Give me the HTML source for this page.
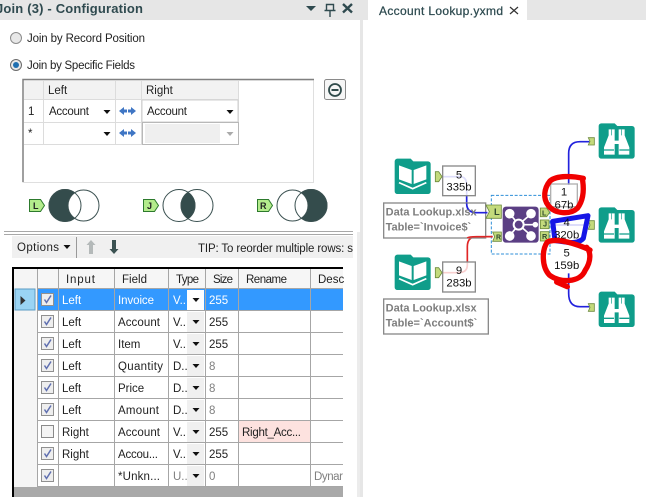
<!DOCTYPE html>
<html><head><meta charset="utf-8"><style>
html,body{margin:0;padding:0;background:#fff;width:646px;height:497px;overflow:hidden}
svg{display:block}
text{font-family:"Liberation Sans",sans-serif;font-size:11.5px;fill:#222}
.g{fill:#808080}.w{fill:#fff}
.n{font-size:33px;font-weight:bold;fill:#7d7d7d}
.c{font-size:34px;fill:#111;text-anchor:middle}
</style></head><body>
<svg width="646" height="497" viewBox="0 0 646 497" xmlns="http://www.w3.org/2000/svg">
<defs>
<path id="fo" d="M8 0H48L56 8H100a8 8 0 0 1 8 8V98a8 8 0 0 1-8 8H8a8 8 0 0 1-8-8V8a8 8 0 0 1 8-8z" fill="#0f9d8a"/>
<g id="book"><use href="#fo"/><path d="M13 20L51 34V76L13 62zM95 20L57 34V76L95 62z" fill="#fff"/><path d="M13 72L54 90L95 72" fill="none" stroke="#fff" stroke-width="5"/></g>
<g id="bin"><use href="#fo"/><path d="M30 18H48V52H60V18H78V36L92 72V94H60V62H48V94H16V72L30 36z" fill="#fff"/><path d="M16 80H46M62 80H92" stroke="#0f9d8a" stroke-width="4"/><path d="M39 18V36M69 18V36" stroke="#0f9d8a" stroke-width="2"/></g>
<path id="car" d="M-3.5 -2H3.5L0 2z" fill="#111"/>
<g id="chk"><rect x="-6" y="-6" width="12" height="12" fill="#eee" stroke="#909090"/><path d="M-3 0L-1 3L3.500 -4" fill="none" stroke="#6070b0" stroke-width="1.500"/></g>
<g id="arr"><path d="M0 4L5 0V2.500H8V5.500H5V8z" fill="#3f76c4" transform="translate(0,-4)"/><path d="M17 4L12 0V2.500H9V5.500H12V8z" fill="#3f76c4" transform="translate(0,-4)"/></g>
</defs>
<rect width="646" height="497" fill="#fff"/>
<!-- title bars -->
<rect width="646" height="20" fill="#e6e6e6"/>
<rect x="360" y="20" width="3" height="477" fill="#e6e6e6"/>
<rect x="357" y="232" width="3" height="265" fill="#ececec"/>
<text x="-4" y="13" style="font-size:13px;fill:#2f4a4f;font-weight:bold" textLength="147">Join (3) - Configuration</text>
<path d="M306 6H316L311 11z" fill="#2f4a4f"/>
<path d="M326.500 4.500H333.500V10.500H326.500zM324.500 10.500H335.500M330 11V17" fill="none" stroke="#2f4a4f" stroke-width="1.400"/>
<path d="M343 4L352 12.500M352 4L343 12.500" stroke="#2f4a4f" stroke-width="2.400"/>
<rect x="368" width="159" height="20" fill="#fff"/>
<text x="379" y="15" textLength="124" style="font-size:12px;fill:#2e4b50;stroke:#2e4b50;stroke-width:.25">Account Lookup.yxmd</text>
<path d="M510 7L518 14M518 7L510 14" stroke="#333" stroke-width="1.200"/>
<!-- radios -->
<circle cx="16" cy="38" r="5.500" fill="#e8e8e8" stroke="#8c8c8c"/>
<text x="27" y="42" textLength="118">Join by Record Position</text>
<circle cx="16" cy="65" r="5.500" fill="#e8e8e8" stroke="#6c6c6c"/><circle cx="16" cy="65" r="3" fill="#1f6fb0"/>
<text x="27" y="69" textLength="108">Join by Specific Fields</text>
<!-- join grid -->
<rect x="23" y="80" width="290.500" height="102.500" fill="#fff" stroke="#dfdfdf"/>
<path d="M23 182V79.500H314" fill="none" stroke="#808080" stroke-width="1.500"/>
<rect x="24" y="81" width="215" height="18" fill="#f2f2f2"/>
<path d="M43.500 81V144M115.500 81V144M141.500 81V144M238.500 81V144M24 99.500H239M24 122.500H239M24 144.500H239" stroke="#dcdcdc" fill="none"/>
<text x="48" y="94">Left</text><text x="146" y="94">Right</text>
<text x="28" y="115">1</text><text x="28" y="137">*</text>
<rect x="44" y="100" width="71" height="22" fill="#fff"/><rect x="142" y="100" width="96" height="22" fill="#fff" stroke="#cfcfcf"/>
<rect x="142.500" y="122.500" width="96" height="22" fill="#fff" stroke="#b8b8b8"/><rect x="145" y="124" width="75" height="19" fill="#efefef"/>
<text x="49" y="115" textLength="40">Account</text><text x="147" y="115" textLength="40">Account</text>
<use href="#car" x="107" y="112"/><use href="#car" x="230" y="112"/><use href="#car" x="107" y="134"/>
<path d="M226.500 132H233.500L230 136z" fill="#aaa"/>
<use href="#arr" x="119" y="111"/><use href="#arr" x="119" y="133"/>
<rect x="324.500" y="79.500" width="21" height="20" rx="2" fill="#f6f6f6" stroke="#8a8a8a"/>
<circle cx="335" cy="90" r="6" fill="none" stroke="#2f4a4a" stroke-width="1.800"/><path d="M331.500 90H338.500" stroke="#2f4a4a" stroke-width="2"/>
<!-- venn -->
<g fill="none" stroke="#3a5050" stroke-width="1">
<circle cx="65" cy="205.500" r="16" fill="#344c4c"/><circle cx="83.500" cy="205.500" r="15.500" fill="#fff"/><circle cx="65" cy="205.500" r="16"/>
<circle cx="179" cy="205.500" r="16"/><circle cx="197" cy="205.500" r="16"/>
<path d="M188 192.300A16 16 0 0 1 188 218.700A16 16 0 0 1 188 192.300z" fill="#344c4c"/>
<circle cx="311" cy="205.500" r="16" fill="#344c4c"/><circle cx="292.500" cy="205.500" r="15.500" fill="#fff"/><circle cx="311" cy="205.500" r="16"/>
</g>
<g fill="#b4ec8c" stroke="#2d7a2d">
<path d="M29.500 199.500H40.500L44.500 205.500L40.500 211.500H29.500z"/><path d="M143.500 199.500H154.500L158.500 205.500L154.500 211.500H143.500z"/><path d="M257.500 199.500H268.500L272.500 205.500L268.500 211.500H257.500z"/>
</g>
<text x="33" y="209" style="font-size:9px;font-weight:bold">L</text><text x="147" y="209" style="font-size:9px;font-weight:bold">J</text><text x="260" y="209" style="font-size:9px;font-weight:bold">R</text>
<!-- separators / toolbar -->
<path d="M4 231.500H353M4 234.500H353" stroke="#a8a8a8"/>
<rect x="12" y="236" width="341" height="22" fill="#f0f0f0"/>
<text x="17" y="251" textLength="42" style="font-size:11.500px">Options</text>
<use href="#car" x="67" y="247"/>
<path d="M76.500 237V258" stroke="#999"/>
<path d="M91 240L95.500 245H93V254H89V245H86.500z" fill="#b4b9b9"/>
<path d="M114 254L118.500 249H116V240H112V249H109.500z" fill="#3b5252"/>
<text x="198" y="252" textLength="155">TIP: To reorder multiple rows: s</text>
<!-- main grid -->
<rect x="12" y="267" width="331" height="230" fill="#000"/>
<rect x="14" y="269" width="329" height="228" fill="#fff"/>
<rect x="14" y="487" width="329" height="10" fill="#a9a9a9"/>
<rect x="14" y="269" width="24" height="218" fill="#f5f5f5"/>
<rect x="38" y="269" width="305" height="19" fill="#f6f6f6"/>
<rect x="38" y="289" width="305" height="21.500" fill="#3399ff"/>
<rect x="15" y="289" width="20" height="21" fill="#9ad4f4" stroke="#5a9cc4" stroke-width="1"/>
<path d="M20.500 296L25.500 300.500L20.500 305z" fill="#333"/>
<rect x="239" y="421" width="71" height="21" fill="#fde2df"/>
<g fill="#f0f0f0">
<rect x="187" y="290" width="17" height="20" fill="#fff"/><rect x="187" y="312" width="17" height="20"/><rect x="187" y="334" width="17" height="20"/><rect x="187" y="356" width="17" height="20"/><rect x="187" y="378" width="17" height="20"/><rect x="187" y="400" width="17" height="20"/><rect x="187" y="422" width="17" height="20"/><rect x="187" y="444" width="17" height="20"/><rect x="187" y="466" width="17" height="20"/>
</g>
<path d="M37.500 269V487M58.500 269V487M114.500 269V487M168.500 269V487M205.500 269V487M238.500 269V487M310.500 269V487M38 288.500H343M38 310.500H343M38 332.500H343M38 354.500H343M38 376.500H343M38 398.500H343M38 420.500H343M38 442.500H343M38 464.500H343M38 486.500H343" stroke="#a6a6a6" fill="none"/>
<g><text x="66" y="283" textLength="29">Input</text><text x="122" y="283" textLength="25">Field</text><text x="176" y="283" textLength="23">Type</text><text x="213" y="283" textLength="20">Size</text><text x="246" y="283" textLength="41">Rename</text><text x="318" y="283">Desc</text></g>
<g id="rows">
<use href="#chk" x="47.500" y="299.500"/><use href="#chk" x="47.500" y="321.500"/><use href="#chk" x="47.500" y="343.500"/><use href="#chk" x="47.500" y="365.500"/><use href="#chk" x="47.500" y="387.500"/><use href="#chk" x="47.500" y="409.500"/>
<rect x="41.500" y="425.500" width="12" height="12" fill="#f4f4f4" stroke="#8a8a8a"/>
<use href="#chk" x="47.500" y="453.500"/><use href="#chk" x="47.500" y="475.500"/>
<text x="62" y="304" class="w">Left</text><text x="118" y="304" class="w" textLength="36">Invoice</text><text x="173" y="304" class="w">V..</text><text x="209" y="304" class="w">255</text>
<text x="62" y="326">Left</text><text x="118" y="326" textLength="42">Account</text><text x="173" y="326">V..</text><text x="209" y="326">255</text>
<text x="62" y="348">Left</text><text x="118" y="348">Item</text><text x="173" y="348">V..</text><text x="209" y="348">255</text>
<text x="62" y="370">Left</text><text x="118" y="370" textLength="45">Quantity</text><text x="173" y="370">D..</text><text x="209" y="370" class="g">8</text>
<text x="62" y="392">Left</text><text x="118" y="392">Price</text><text x="173" y="392">D..</text><text x="209" y="392" class="g">8</text>
<text x="62" y="414">Left</text><text x="118" y="414" textLength="41">Amount</text><text x="173" y="414">D..</text><text x="209" y="414" class="g">8</text>
<text x="62" y="436">Right</text><text x="118" y="436" textLength="42">Account</text><text x="173" y="436">V..</text><text x="209" y="436">255</text><text x="242" y="436" textLength="59">Right_Acc...</text>
<text x="62" y="458">Right</text><text x="118" y="458" textLength="40">Accou...</text><text x="173" y="458">V..</text><text x="209" y="458">255</text>
<text x="118" y="480" textLength="42">*Unkn...</text><text x="173" y="480" class="g">U..</text><text x="209" y="480" class="g">0</text><text x="314" y="480" class="g" textLength="29">Dynar</text>
</g>
<use href="#car" x="196" y="300"/><use href="#car" x="196" y="322"/><use href="#car" x="196" y="344"/><use href="#car" x="196" y="366"/><use href="#car" x="196" y="388"/><use href="#car" x="196" y="410"/><use href="#car" x="196" y="432"/><use href="#car" x="196" y="454"/><use href="#car" x="196" y="476"/>
<!-- canvas -->
<g transform="translate(360,110) scale(.33333)">
<rect x="394" y="256" width="176" height="176" fill="none" stroke="#2f8fd8" stroke-width="3" stroke-dasharray="9 5"/>
<g fill="none" stroke-width="5">
<path d="M320 258V280Q320 308 350 308H382" stroke="#2222dd"/>
<path d="M245 200H300Q320 200 320 225V258" stroke="#d8d8fa"/>
<path d="M398 380H350Q322 380 322 410V456" stroke="#e02626"/>
<path d="M322 456V465Q322 488 295 488H245" stroke="#f8c8c8"/>
<path d="M626 225V130Q626 95 660 95H688" stroke="#2222dd"/>
<path d="M626 490V550Q626 590 660 590H688" stroke="#2222dd"/>
<path d="M570 345H690" stroke="#d8d8fa"/>
</g>
<g fill="none" stroke="#8a8a8a" stroke-width="4">
<rect x="248" y="168" width="98" height="89" fill="#fff" fill-opacity=".15"/>
<rect x="248" y="456" width="98" height="90" fill="#fff" fill-opacity=".15"/>
<rect x="572" y="222" width="80" height="68" stroke="#b0b0b0" fill="#fff" fill-opacity=".6"/>
<rect x="71" y="279" width="306" height="105" fill="#fff" stroke="#8a8a8a" fill-opacity=".85"/>
<rect x="71" y="567" width="314" height="105" fill="#fff"/>
</g>
<path d="M320 280Q320 308 350 308H382" fill="none" stroke="#2222dd" stroke-width="5"/>
<path d="M398 380H350Q326 380 322 384" fill="none" stroke="#e02626" stroke-width="5"/>
<use href="#book" x="104" y="146"/><use href="#book" x="104" y="434"/>
<use href="#bin" x="716" y="40"/><use href="#bin" x="716" y="292"/><use href="#bin" x="716" y="545"/>
<text x="77" y="317" class="n">Data Lookup.xlsx</text><text x="77" y="362" class="n">Table=`Invoice$`</text>
<text x="77" y="605" class="n">Data Lookup.xlsx</text><text x="77" y="650" class="n">Table=`Account$`</text>
<g fill="#c3da7c" stroke="#6d8a3c" stroke-width="2.500">
<path d="M226 185H236L246 200L236 215H226z"/>
<path d="M226 473H236L246 488L236 503H226z"/>
<path d="M378 285H424V325H378L388 305z"/>
<path d="M398 366H424V394H398L404 380z"/>
<path d="M541 294H560L569 307L560 320H541z"/>
<rect x="541" y="330" width="26" height="26"/>
<rect x="541" y="365" width="26" height="28"/>
<path d="M685 83H703V105H685L690 94z"/><path d="M685 332H703V358H685L690 345z"/><path d="M685 581H703V604H685L690 592z"/>
</g>
<text x="402" y="315" style="font-size:28px;font-weight:bold;fill:#2f4a2f">L</text>
<text x="408" y="389" style="font-size:21px;font-weight:bold;fill:#2f4a2f">R</text>
<text x="546" y="316" style="font-size:22px;font-weight:bold;fill:#2f4a2f">L</text>
<text x="549" y="350" style="font-size:22px;font-weight:bold;fill:#2f4a2f">J</text>
<text x="546" y="387" style="font-size:22px;font-weight:bold;fill:#2f4a2f">R</text>
<rect x="428" y="290" width="108" height="108" rx="10" fill="#5b3f84"/>
<g stroke="#fff" stroke-width="5" fill="#fff">
<path d="M476 344L450 312M476 344L513 312M476 344L450 376M476 344L513 376M476 344L526 344" />
<circle cx="449" cy="311" r="12"/><circle cx="513" cy="311" r="12"/><circle cx="449" cy="378" r="12"/><circle cx="513" cy="378" r="12"/><circle cx="526" cy="344" r="6"/>
<circle cx="476" cy="344" r="15" fill="#5b3f84" stroke-width="6"/>
</g>
<text x="297" y="205" class="c">5</text><text x="297" y="241" class="c">335b</text>
<text x="297" y="492" class="c">9</text><text x="297" y="529" class="c">283b</text>
<text x="612" y="257" class="c">1</text><text x="612" y="296" class="c">67b</text>
<path d="M578 334L684 317L670 385Q660 398 630 398L585 392z" fill="none" stroke="#1616e6" stroke-width="15" stroke-linejoin="round"/>
<text x="620" y="348" class="c">4</text><text x="620" y="386" class="c">320b</text>
<text x="620" y="439" class="c">5</text><text x="620" y="477" class="c">159b</text>
<g fill="none" stroke="#f00000" stroke-width="16" stroke-linecap="round" stroke-linejoin="round">
<path d="M670 205C640 198 590 195 570 213C552 235 548 265 565 287C585 312 630 315 652 295C670 272 672 240 668 212"/>
<path d="M690 420C650 402 590 382 562 396C545 420 545 470 568 495C600 520 660 518 675 482C695 452 692 425 680 412"/>
<path d="M590 516L622 530"/>
</g>
</g>
</svg>
</body></html>
